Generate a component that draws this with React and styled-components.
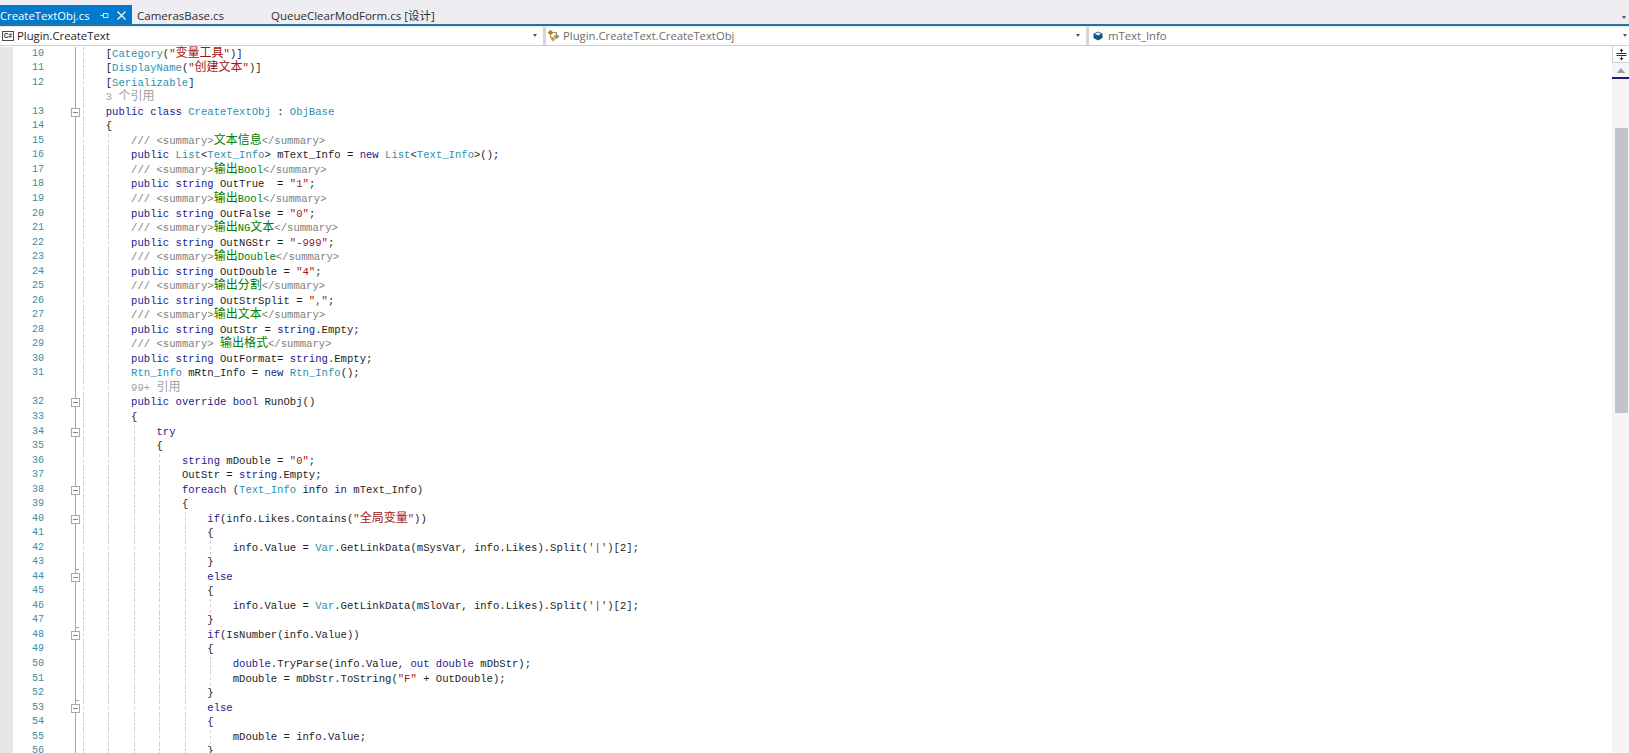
import React from 'react'
import styled, { createGlobalStyle } from 'styled-components'

const ROW_HEIGHT = 14.54
const CHAR = 6.35
const INDENT = CHAR * 4

const GlobalStyle = createGlobalStyle`
    html, body {
        margin: 0;
        padding: 0;
        background: #ffffff;
    }
`

const Page = styled.div`
    display: flex;
    flex-direction: column;
    height: 100vh;
    overflow: hidden;
    font-family: 'Open Sans', 'Noto Sans CJK SC', sans-serif;
`

const TabStrip = styled.div`
    display: flex;
    align-items: flex-end;
    height: 24px;
    padding-right: 3px;
    background: #eeeef2;
    border-bottom: 2px solid #2f6f9c;
`

const Tab = styled.div`
    display: flex;
    align-items: center;
    height: 19px;
    width: ${({ $width }) => $width}px;
    padding-top: 1px;
    padding-left: ${({ $pad }) => $pad}px;
    box-sizing: border-box;
    font-size: ${({ $active }) => ($active ? 11.3 : 11.5)}px;
    white-space: nowrap;
    color: ${({ $active }) => ($active ? '#ffffff' : '#2d2d30')};
    background: ${({ $active }) => ($active ? '#007acc' : 'transparent')};
`

const TabTitle = styled.span`
    flex: 1;
`

const TabButton = styled.svg`
    flex: none;
    width: 9px;
    height: 9px;
    margin-right: ${({ $gap }) => $gap}px;
`

const StripSpacer = styled.div`
    flex: 1;
`

const Arrow = styled.i`
    flex: none;
    width: 0;
    height: 0;
    border-left: 2.5px solid transparent;
    border-right: 2.5px solid transparent;
    border-top: 3px solid #555555;
`

const StripArrow = styled(Arrow)`
    margin-bottom: 5px;
`

const NavBar = styled.div`
    display: flex;
    height: 18px;
    border-top: 1px solid #dcecf6;
    border-bottom: 1px solid #cccedb;
    background: #ffffff;
`

const NavCell = styled.div`
    display: flex;
    align-items: center;
    flex: ${({ $width }) => ($width ? `0 0 ${$width}px` : 1)};
    box-sizing: border-box;
    padding: 0 ${({ $last }) => ($last ? 2 : 6)}px 1px ${({ $inset }) => $inset || 0}px;
    border-right: ${({ $last }) => ($last ? 'none' : '3px solid #d6d7dc')};
    font-size: 11.3px;
    color: ${({ $muted }) => ($muted ? '#6d6d6d' : '#1e1e1e')};
`

const NavText = styled.span`
    flex: 1;
    margin-left: ${({ $gap }) => $gap}px;
    white-space: nowrap;
`

const CsBadge = styled.span`
    flex: none;
    width: 10px;
    height: 8px;
    border: 1px solid #4a4a4a;
    background: #ffffff;
    font: bold 6.5px/8px 'Liberation Sans', sans-serif;
    text-align: center;
    color: #2c2c2c;
`

const NavIcon = styled.svg`
    flex: none;
    width: ${({ $size }) => $size}px;
    height: ${({ $size }) => $size}px;
`

const Editor = styled.div`
    flex: 1;
    display: flex;
    min-height: 0;
`

const Code = styled.div`
    flex: 1;
    min-width: 0;
    overflow: hidden;
    font-family: 'Liberation Mono', 'Noto Sans CJK SC', monospace;
    font-size: 10.58px;
    color: #1e1e1e;
`

const Row = styled.div`
    position: relative;
    display: flex;
    height: ${ROW_HEIGHT}px;
    line-height: ${ROW_HEIGHT}px;

    &:first-child {
        margin-top: 0.7px;
    }
`

const Gutter = styled.div`
    flex: 0 0 13px;
    background: #e6e7e8;
`

const LineNo = styled.div`
    flex: 0 0 31px;
    font-size: 10px;
    text-align: right;
    color: #3c8ca3;
`

const Outline = styled.div`
    position: relative;
    flex: 0 0 36.3px;

    &::before {
        content: '';
        position: absolute;
        left: 31px;
        top: 0;
        bottom: 0;
        width: 1px;
        background: #a8a8a8;
    }
`

const Fold = styled.i`
    position: absolute;
    left: 26.5px;
    top: 3px;
    width: 7px;
    height: 7px;
    border: 1px solid #aaaaaa;
    background: linear-gradient(#8a8a8a, #8a8a8a) center / 5px 1px no-repeat, #ffffff;
`

const FoldEnd = styled.i`
    position: absolute;
    left: 31px;
    bottom: 0;
    width: 4px;
    height: 1px;
    background: #a8a8a8;
`

const Guide = styled.i`
    position: absolute;
    left: ${({ $level }) => 83 + $level * INDENT}px;
    top: 0;
    bottom: 0;
    border-left: 1px dashed #d2d2d2;
`

const Source = styled.pre`
    margin: 0;
    padding-left: ${({ $level }) => $level * INDENT}px;
    font: inherit;
    line-height: inherit;
    white-space: pre;
`

const tokenColors = {
    k: '#1c1c8c',
    t: '#2b91af',
    s: '#a31515',
    c: '#008000',
    d: '#808080',
    l: '#a0a0a0',
}

const Token = styled.span`
    color: ${({ $kind }) => tokenColors[$kind] || 'inherit'};
`

const Cjk = styled.span`
    font-size: 12px;
`

const Scrollbar = styled.div`
    flex: 0 0 17px;
    display: flex;
    flex-direction: column;
    background: #f5f5f5;
`

const Splitter = styled.div`
    display: flex;
    align-items: center;
    justify-content: center;
    height: 16px;
    background: #ffffff;
    border-left: 1px solid #cccedb;
    border-bottom: 1px solid #cccedb;
`

const ScrollUp = styled.div`
    display: flex;
    align-items: center;
    justify-content: center;
    height: 14px;
`

const UpArrow = styled.i`
    width: 0;
    height: 0;
    border-left: 4.5px solid transparent;
    border-right: 4.5px solid transparent;
    border-bottom: 5px solid #9a9a9f;
`

const CaretMark = styled.div`
    height: 2px;
    background: #1c1c6e;
`

const Thumb = styled.div`
    height: 285px;
    margin: 49px 1px 0 3px;
    background: #c2c3c9;
`

// [line number, indent level, source]; {x|text} marks a coloured token
const lines = [
    [10, 1, '[{t|Category}({s|"变量工具"})]'],
    [11, 1, '[{t|DisplayName}({s|"创建文本"})]'],
    [12, 1, '[{t|Serializable}]'],
    [null, 1, '{l|3 个引用}'],
    [13, 1, '{k|public} {k|class} {t|CreateTextObj} : {t|ObjBase}', 'fold'],
    [14, 1, '{'],
    [15, 2, '{d|/// <summary>}{c|文本信息}{d|</summary>}'],
    [16, 2, '{k|public} {t|List}<{t|Text_Info}> mText_Info = {k|new} {t|List}<{t|Text_Info}>();'],
    [17, 2, '{d|/// <summary>}{c|输出Bool}{d|</summary>}'],
    [18, 2, '{k|public} {k|string} OutTrue  = {s|"1"};'],
    [19, 2, '{d|/// <summary>}{c|输出Bool}{d|</summary>}'],
    [20, 2, '{k|public} {k|string} OutFalse = {s|"0"};'],
    [21, 2, '{d|/// <summary>}{c|输出NG文本}{d|</summary>}'],
    [22, 2, '{k|public} {k|string} OutNGStr = {s|"-999"};'],
    [23, 2, '{d|/// <summary>}{c|输出Double}{d|</summary>}'],
    [24, 2, '{k|public} {k|string} OutDouble = {s|"4"};'],
    [25, 2, '{d|/// <summary>}{c|输出分割}{d|</summary>}'],
    [26, 2, '{k|public} {k|string} OutStrSplit = {s|","};'],
    [27, 2, '{d|/// <summary>}{c|输出文本}{d|</summary>}'],
    [28, 2, '{k|public} {k|string} OutStr = {k|string}.Empty;'],
    [29, 2, '{d|/// <summary>} {c|输出格式}{d|</summary>}'],
    [30, 2, '{k|public} {k|string} OutFormat= {k|string}.Empty;'],
    [31, 2, '{t|Rtn_Info} mRtn_Info = {k|new} {t|Rtn_Info}();'],
    [null, 2, '{l|99+ 引用}'],
    [32, 2, '{k|public} {k|override} {k|bool} RunObj()', 'fold'],
    [33, 2, '{'],
    [34, 3, '{k|try}', 'fold'],
    [35, 3, '{'],
    [36, 4, '{k|string} mDouble = {s|"0"};'],
    [37, 4, 'OutStr = {k|string}.Empty;'],
    [38, 4, '{k|foreach} ({t|Text_Info} info {k|in} mText_Info)', 'fold'],
    [39, 4, '{'],
    [40, 5, '{k|if}(info.Likes.Contains({s|"全局变量"}))', 'fold'],
    [41, 5, '{'],
    [42, 6, "info.Value = {t|Var}.GetLinkData(mSysVar, info.Likes).Split({s|'|'})[2];"],
    [43, 5, '}', 'end'],
    [44, 5, '{k|else}', 'fold'],
    [45, 5, '{'],
    [46, 6, "info.Value = {t|Var}.GetLinkData(mSloVar, info.Likes).Split({s|'|'})[2];"],
    [47, 5, '}', 'end'],
    [48, 5, '{k|if}(IsNumber(info.Value))', 'fold'],
    [49, 5, '{'],
    [50, 6, '{k|double}.TryParse(info.Value, {k|out} {k|double} mDbStr);'],
    [51, 6, 'mDouble = mDbStr.ToString({s|"F"} + OutDouble);'],
    [52, 5, '}', 'end'],
    [53, 5, '{k|else}', 'fold'],
    [54, 5, '{'],
    [55, 6, 'mDouble = info.Value;'],
    [56, 5, '}', 'end'],
]

// CJK glyphs are drawn a little narrower than two cells, like the editor's font
const withCjk = (text) =>
    text.split(/([\u4e00-\u9fff]+)/).map((part, i) => (i % 2 ? <Cjk key={i}>{part}</Cjk> : part))

const parseSource = (source) =>
    source.split(/(\{[ktscdl]\|[^}]*\})/).map((part, i) => {
        const match = part.match(/^\{([ktscdl])\|([^}]*)\}$/)
        if (!match) return <React.Fragment key={i}>{withCjk(part)}</React.Fragment>
        return (
            <Token key={i} $kind={match[1]}>
                {withCjk(match[2])}
            </Token>
        )
    })

const CodeRow = ({ num, level, source, marker }) => (
    <Row>
        <Gutter />
        <LineNo>{num}</LineNo>
        <Outline>
            {marker === 'fold' && <Fold />}
            {marker === 'end' && <FoldEnd />}
        </Outline>
        <Source $level={level}>{parseSource(source)}</Source>
        {Array.from({ length: level }, (_, i) => (
            <Guide key={i} $level={i} />
        ))}
    </Row>
)

const PinIcon = () => (
    <TabButton viewBox="0 0 9 9" $gap={8}>
        <path d="M0.5 4.5H3.5M3.5 2V7M3.5 2.5H8V6.5H3.5" fill="none" stroke="#cfe8f8" strokeWidth="1" />
    </TabButton>
)

const CloseIcon = () => (
    <TabButton viewBox="0 0 9 9" $gap={6}>
        <path d="M0.5 0.5L8.5 8.5M8.5 0.5L0.5 8.5" fill="none" stroke="#f2f9fd" strokeWidth="1.2" />
    </TabButton>
)

const ClassIcon = () => (
    <NavIcon $size={13} viewBox="0 0 13 13">
        <path d="M3.5 1L6.5 3.6L3.5 6.2L0.5 3.6Z" fill="#b9791f" />
        <path d="M6.5 3.6H9.5V6M3.5 6.2V8.5H6" fill="none" stroke="#7b7b6a" strokeWidth="1" />
        <path d="M9.5 5L12.5 7.6L9.5 10.2L6.5 7.6Z" fill="#8f9a52" />
        <path d="M6 8L8.4 10.2L6 12.4L3.6 10.2Z" fill="#d99b3c" />
    </NavIcon>
)

const FieldIcon = () => (
    <NavIcon $size={10} viewBox="0 0 10 10">
        <path d="M5 0.5L9.5 2.6V7L5 9.5L0.5 7V2.6Z" fill="#14587f" />
        <path d="M5 1.2L8.4 2.8L5 4.5L1.6 2.8Z" fill="#d8ecf7" />
    </NavIcon>
)

const SplitIcon = () => (
    <svg width="11" height="13" viewBox="0 0 11 13">
        <path d="M5.5 0.5L3.5 3H7.5ZM5.5 12.5L3.5 10H7.5Z" fill="#333333" />
        <path d="M5.5 2.5V4.5M5.5 8.5V10.5M0.5 5.5H10.5M0.5 7.5H10.5" stroke="#333333" strokeWidth="1" fill="none" />
    </svg>
)

const App = () => (
    <Page>
        <GlobalStyle />
        <TabStrip>
            <Tab $active $width={132}>
                <TabTitle>CreateTextObj.cs</TabTitle>
                <PinIcon />
                <CloseIcon />
            </Tab>
            <Tab $width={139} $pad={5}>
                CamerasBase.cs
            </Tab>
            <Tab $width={200}>QueueClearModForm.cs [设计]</Tab>
            <StripSpacer />
            <StripArrow />
        </TabStrip>
        <NavBar>
            <NavCell $width={546} $inset={2}>
                <CsBadge>C#</CsBadge>
                <NavText $gap={3}>Plugin.CreateText</NavText>
                <Arrow />
            </NavCell>
            <NavCell $width={543} $inset={1} $muted>
                <ClassIcon />
                <NavText $gap={3}>Plugin.CreateText.CreateTextObj</NavText>
                <Arrow />
            </NavCell>
            <NavCell $last $inset={4} $muted>
                <FieldIcon />
                <NavText $gap={5}>mText_Info</NavText>
                <Arrow />
            </NavCell>
        </NavBar>
        <Editor>
            <Code>
                {lines.map(([num, level, source, marker], i) => (
                    <CodeRow key={i} num={num} level={level} source={source} marker={marker} />
                ))}
            </Code>
            <Scrollbar>
                <Splitter>
                    <SplitIcon />
                </Splitter>
                <ScrollUp>
                    <UpArrow />
                </ScrollUp>
                <CaretMark />
                <Thumb />
            </Scrollbar>
        </Editor>
    </Page>
)

export default App
